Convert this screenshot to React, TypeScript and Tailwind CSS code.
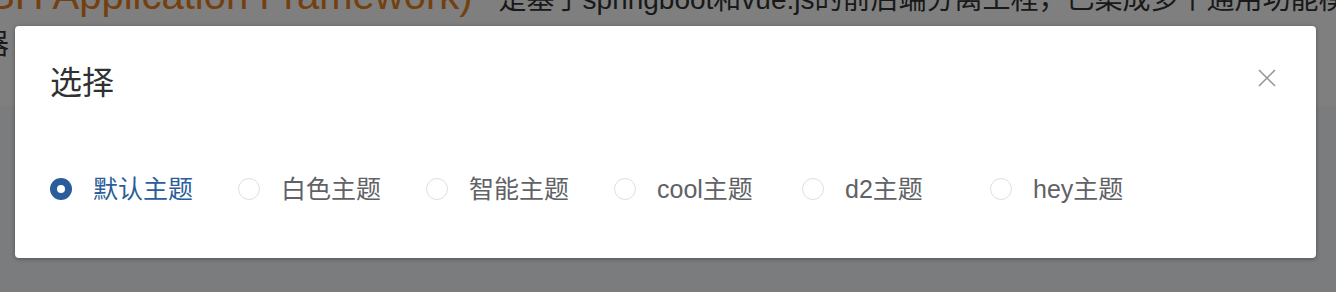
import { useState } from "react";

const THEMES = [
  { value: "default", label: "默认主题" },
  { value: "white", label: "白色主题" },
  { value: "smart", label: "智能主题" },
  { value: "cool", label: "cool主题" },
  { value: "d2", label: "d2主题" },
  { value: "hey", label: "hey主题" },
];

function CloseIcon() {
  return (
    <svg width="18" height="18" viewBox="0 0 18 18" fill="none">
      <path d="M1 1L17 17M17 1L1 17" stroke="#909399" strokeWidth="1.5" />
    </svg>
  );
}

export default function App() {
  const [theme, setTheme] = useState("default");

  return (
    <div className="relative flex h-[292px] flex-col overflow-hidden bg-white font-[Liberation_Sans,Noto_Sans_CJK_SC,sans-serif]">
      {/* Page behind the mask */}
      <div className="-mt-[26px] h-[50px] whitespace-nowrap text-[28px] leading-[42px] text-[#333]">
        <span className="-ml-[12px] text-[40px] text-[#e6821e]">SH Application Framework)</span>
        <span className="ml-[26px]">是基于springboot和vue.js的前后端分离工程，已集成多个通用功能模块</span>
      </div>
      <div className="h-[42px] whitespace-nowrap text-[28px] leading-[42px] text-[#333]">
        <span className="-ml-[19px]">器 等常用功能。</span>
      </div>
      <div className="mt-[40px] flex-1 bg-[#f6f8fc]" />

      {/* Mask */}
      <div className="absolute inset-0 bg-black/50" />

      {/* Dialog */}
      <div className="absolute left-[15px] top-[26px] flex h-[232px] w-[1301px] flex-col rounded-[4px] bg-white shadow-[0_1px_4px_rgba(0,0,0,0.35)]">
        <div className="flex items-center justify-between pl-[35px] pr-[40px] pt-[37px]">
          <span className="text-[32px] leading-[40px] text-[#303133]">选择</span>
          <button className="mb-[10px] flex h-[18px] w-[18px] items-center justify-center">
            <CloseIcon />
          </button>
        </div>
        <div className="flex px-[35px] pt-[74px]">
          {THEMES.map((t) => {
            const checked = t.value === theme;
            return (
              <label
                key={t.value}
                className="flex w-[188px] cursor-pointer items-center"
                onClick={() => setTheme(t.value)}
              >
                {checked ? (
                  <span className="flex h-[22px] w-[22px] items-center justify-center rounded-full bg-[#2a5d9a]">
                    <span className="h-[8px] w-[8px] rounded-full bg-white" />
                  </span>
                ) : (
                  <span className="h-[22px] w-[22px] rounded-full border border-[#dcdfe6] bg-white" />
                )}
                <span
                  className={
                    checked
                      ? "ml-[21px] text-[25px] leading-[24px] text-[#2a5d9a]"
                      : "ml-[21px] text-[25px] leading-[24px] text-[#606266]"
                  }
                >
                  {t.label}
                </span>
              </label>
            );
          })}
        </div>
      </div>
    </div>
  );
}
